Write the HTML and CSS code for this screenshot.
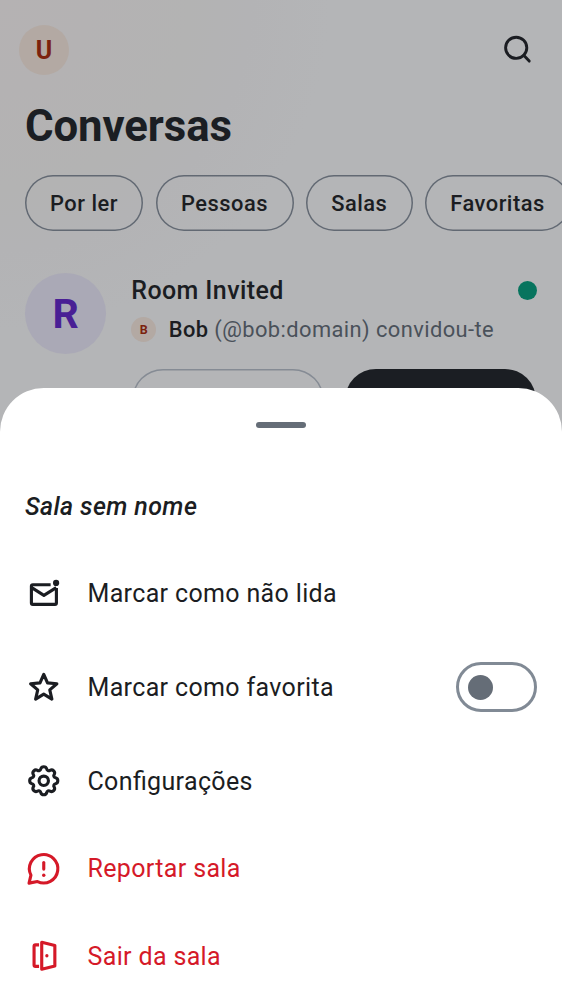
FILE: index.html
```
<!DOCTYPE html>
<html lang="pt">
<head>
<meta charset="utf-8">
<title>Conversas</title>
<link rel="stylesheet" href="styles.css">
</head>
<body>
<div class="app">
  <main class="page">
    <header class="topbar">
      <div class="avatar avatar-user">U</div>
      <svg class="search" viewBox="0 0 38 38"><circle cx="17.2" cy="16.8" r="10.6"/><path d="M24.7 24.3l5.5 5.8"/></svg>
    </header>
    <h1 class="title">Conversas</h1>
    <nav class="chips">
      <span class="chip chip-unread">Por ler</span>
      <span class="chip chip-people">Pessoas</span>
      <span class="chip chip-rooms">Salas</span>
      <span class="chip chip-fav">Favoritas</span>
    </nav>
    <section class="room">
      <div class="avatar avatar-room">R</div>
      <div class="room-body">
        <div class="room-head"><span class="room-name">Room Invited</span><i class="unread-dot"></i></div>
        <div class="invite"><div class="avatar avatar-bob">B</div><p class="invite-text"><b>Bob</b> (@bob:domain) convidou-te</p></div>
        <div class="actions"><span class="btn btn-outline"></span><span class="btn btn-solid"></span></div>
      </div>
    </section>
  </main>
  <section class="sheet">
    <div class="handle"></div>
    <h2 class="sheet-title">Sala sem nome</h2>
    <div class="item">
      <svg class="icon" viewBox="0 0 24 24"><path d="M16.4 6.2H5a.9.9 0 0 0-.9.9v10.8c0 .5.4.9.9.9h14.2c.5 0 .9-.4.9-.9V8.3"/><path d="M4.3 8.1l7.8 4.9 7.9-4.9"/><circle class="fill" cx="19.9" cy="5.1" r="2"/></svg>
      <span class="label">Marcar como não lida</span>
    </div>
    <div class="item item-toggle">
      <svg class="icon" viewBox="0 0 24 24"><path d="M12 3.4l2.4 5.5 6 .55-4.55 3.95 1.35 5.85L12 16.1l-5.2 3.15 1.35-5.85L3.6 9.45l6-.55z"/></svg>
      <span class="label">Marcar como favorita</span>
      <span class="switch"><i class="thumb"></i></span>
    </div>
    <div class="item">
      <svg class="icon" viewBox="0 0 24 24"><path d="M10.1 4.45A1.97 1.97 0 0 1 13.9 4.45A1.3 1.3 0 0 0 16.02 5.31A1.97 1.97 0 0 1 18.69 7.98A1.3 1.3 0 0 0 19.55 10.1A1.97 1.97 0 0 1 19.55 13.9A1.3 1.3 0 0 0 18.69 16.02A1.97 1.97 0 0 1 16.02 18.69A1.3 1.3 0 0 0 13.9 19.55A1.97 1.97 0 0 1 10.1 19.55A1.3 1.3 0 0 0 7.98 18.69A1.97 1.97 0 0 1 5.31 16.02A1.3 1.3 0 0 0 4.45 13.9A1.97 1.97 0 0 1 4.45 10.1A1.3 1.3 0 0 0 5.31 7.98A1.97 1.97 0 0 1 7.98 5.31A1.3 1.3 0 0 0 10.1 4.45Z"/><circle cx="12" cy="12" r="3"/></svg>
      <span class="label">Configurações</span>
    </div>
    <div class="item danger">
      <svg class="icon" viewBox="0 0 24 24"><path d="M2.6 21.2l1.2-5.1A9.1 9.1 0 1 1 8 20.2z"/><path class="round" d="M12 8v4.2"/><circle class="fill" cx="12" cy="16.1" r="1.1"/></svg>
      <span class="label">Reportar sala</span>
    </div>
    <div class="item danger">
      <svg class="icon" viewBox="0 0 24 24"><path d="M9 5H6.7c-.5 0-.9.4-.9.9v12c0 .5.4.9.9.9H9"/><path d="M10.7 3.4l8.4 2v13.2l-8.4 2z"/><circle class="fill" cx="14" cy="12" r="1.05"/></svg>
      <span class="label">Sair da sala</span>
    </div>
  </section>
</div>
</body>
</html>
```
FILE: styles.css
```
* { box-sizing: border-box; }
body { margin: 0; font-family: Roboto, sans-serif; color: #1b1d22; }
.app { position: relative; width: 562px; height: 1000px; overflow: hidden; }
.page {
  height: 1000px;
  background: radial-gradient(circle at 0 0, #b5b2b3 0, #b4b2b3 90px, #b3b3b3 190px, #b3b3b5 250px, #b4b5b7 330px);
}
.topbar { display: flex; justify-content: space-between; align-items: center; height: 100px; padding: 0 25px 0 19px; }
.avatar { display: flex; align-items: center; justify-content: center; flex: none; border-radius: 50%; font-weight: 700; }
.avatar-user { width: 50px; height: 50px; background: #b3a9a3; color: #7c220d; font-size: 25px; }
.search { width: 38px; height: 38px; fill: none; stroke: #1b1d22; stroke-width: 2.9; stroke-linecap: round; }
.title { margin: 0; padding-left: 25px; height: 75px; font-size: 43.75px; line-height: 52px; letter-spacing: -.1px; font-weight: 700; color: #1b1e23; }
.chips { display: flex; gap: 12.5px; height: 56px; padding-left: 25px; }
.chip { flex: none; height: 56px; box-shadow: inset 0 0 0 1.5px #626973; border-radius: 28px; display: flex; align-items: center; justify-content: center; font-size: 21.875px; font-weight: 500; letter-spacing: .5px; }
.chip-unread { width: 118px; }
.chip-people { width: 138px; }
.chip-rooms { width: 106.5px; }
.chip-fav { width: 145px; }
.room { display: flex; gap: 25px; padding: 42px 25px 0; }
.avatar-room { width: 81.25px; height: 81.25px; background: #aaa9b6; color: #491f95; font-size: 41px; }
.room-body { flex: 1; }
.room-head { display: flex; justify-content: space-between; align-items: center; height: 35px; }
.room-name { font-size: 25px; font-weight: 500; letter-spacing: .4px; }
.unread-dot { width: 19px; height: 19px; border-radius: 50%; background: #07745e; }
.invite { display: flex; align-items: center; gap: 12.5px; height: 43px; }
.avatar-bob { width: 25px; height: 25px; background: #b3a9a3; color: #7c220d; font-size: 12.5px; }
.invite-text { margin: 0; font-size: 21.875px; letter-spacing: .42px; color: #4a515a; white-space: nowrap; }
.invite-text b { font-weight: 500; color: #1b1d22; }
.actions { display: flex; gap: 21px; padding: 18px 1px 0; }
.btn { flex: 1; height: 62px; border-radius: 31px; }
.btn-outline { box-shadow: inset 0 0 0 1.4px #858b94; }
.btn-solid { background: #1b1e23; }
/* The sheet lies over the dimmed conversation list */
.sheet { position: absolute; left: 0; right: 0; bottom: 0; height: 612.5px; padding-top: 34.4px; background: #fff; border-radius: 43.75px 43.75px 0 0; }
.handle { width: 50px; height: 6.25px; margin: 0 auto 34.35px; border-radius: 4px; background: #656d77; }
.sheet-title { margin: 0; height: 87.5px; padding: 1px 0 0 25px; line-height: 87.5px; font-size: 25px; font-weight: 500; font-style: italic; letter-spacing: .38px; }
.item { display: flex; align-items: center; gap: 25px; height: 87.5px; padding: 0 25px; }
.item-toggle { height: 100px; }
.icon { width: 37.5px; height: 37.5px; fill: none; stroke: currentColor; stroke-width: 2; stroke-linejoin: round; }
.icon .fill { fill: currentColor; stroke: none; }
.icon .round { stroke-linecap: round; }
.label { flex: 1; font-size: 25px; letter-spacing: .35px; font-feature-settings: "liga" 1; }
.danger { color: #d51928; }
.switch { display: flex; align-items: center; width: 81px; height: 50px; padding-left: 9px; border: 3px solid #818a95; border-radius: 25px; }
.thumb { width: 25px; height: 25px; border-radius: 50%; background: #656d77; }
```
